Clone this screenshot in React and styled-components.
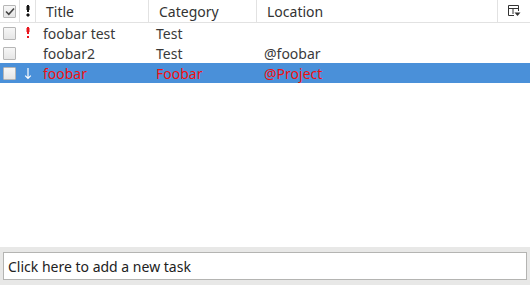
import React from "react";
import styled, { createGlobalStyle } from "styled-components";

const GlobalStyle = createGlobalStyle`
  html, body {
    margin: 0;
    padding: 0;
    background: #ffffff;
  }
  body {
    font-family: "Noto Sans", "DejaVu Sans", sans-serif;
  }
`;

const COLUMNS = "20px 16px 113px 108px 241px 32px";

const Window = styled.div`
  width: 530px;
  height: 285px;
  display: flex;
  flex-direction: column;
  background: #ffffff;
  overflow: hidden;
`;

const List = styled.div`
  flex: 1;
  display: flex;
  flex-direction: column;
`;

const Header = styled.div`
  display: grid;
  grid-template-columns: ${COLUMNS};
  height: 22px;
  border-bottom: 1px solid #e2e2e2;
`;

const HeaderCell = styled.div`
  display: flex;
  align-items: center;
  justify-content: ${(p) => (p.$center ? "center" : "flex-start")};
  padding-left: ${(p) => (p.$center ? 0 : 10)}px;
  border-right: ${(p) => (p.$last ? "none" : "1px solid #e2e2e2")};
  font-size: 14px;
  color: #333333;
`;

const Row = styled.div`
  display: grid;
  grid-template-columns: ${COLUMNS};
  height: 20px;
  background: ${(p) => (p.$selected ? "#4a90d9" : "transparent")};
  color: ${(p) => (p.$red ? "#f01010" : "#3a3a3a")};
`;

const Cell = styled.div`
  display: flex;
  align-items: center;
  justify-content: ${(p) => (p.$center ? "center" : "flex-start")};
  padding-left: ${(p) => (p.$center ? 0 : 7)}px;
  font-size: 14px;
  white-space: nowrap;
  overflow: hidden;
`;

const CheckCell = styled.div`
  display: flex;
  align-items: center;
  padding-left: 3px;
`;

const Check = styled.div`
  width: 11px;
  height: 11px;
  border: 1px solid #b6b6b6;
  border-radius: 1px;
  background: linear-gradient(#f6f6f6, #e6e6e6);
  display: flex;
  align-items: center;
  justify-content: center;
`;

const Footer = styled.div`
  height: 38px;
  background: #e8e8e7;
  display: flex;
  align-items: stretch;
  padding: 5px 3px;
  box-sizing: border-box;
`;

const TaskInput = styled.div`
  flex: 1;
  border: 1px solid #b4b4b2;
  background: #ffffff;
  display: flex;
  align-items: center;
  padding-left: 4px;
  font-size: 14px;
  color: #222222;
`;

const CheckMark = () => (
  <svg width="10" height="9" viewBox="0 0 10 9">
    <path d="M1 4.5 L3.8 7.3 L9 1.5" fill="none" stroke="#444" strokeWidth="1.6" />
  </svg>
);

const PriorityIcon = ({ color, plus }) => (
  <svg width="6" height="14" viewBox="0 0 6 14">
    <rect x="2" y="1" width="2" height="7" fill={color} />
    <rect x="1.5" y="2" width="3" height="4" fill={color} />
    {plus ? (
      <>
        <rect x="2" y="9.5" width="2" height="3" fill={color} />
        <rect x="1" y="10.5" width="4" height="1" fill={color} />
      </>
    ) : (
      <rect x="2" y="10" width="2" height="2" fill={color} />
    )}
  </svg>
);

const ArrowDown = () => (
  <svg width="8" height="13" viewBox="0 0 8 13">
    <path d="M4 1 V11.5 M1.2 8.6 L4 11.5 L6.8 8.6" fill="none" stroke="#fff" strokeWidth="1.2" />
  </svg>
);

const ColumnsIcon = () => (
  <svg width="13" height="12" viewBox="0 0 13 12">
    <path d="M0.5 0.5 H10.5 V6 M0.5 0.5 V10.5 H6 M0.5 3.5 H10.5 M5 3.5 V9" fill="none" stroke="#333" strokeWidth="1" />
    <path d="M6.5 7.5 H12.5 L9.5 11 Z" fill="#333" />
  </svg>
);

const tasks = [
  { title: "foobar test", category: "Test", location: "", priority: "high" },
  { title: "foobar2", category: "Test", location: "@foobar", priority: "" },
  { title: "foobar", category: "Foobar", location: "@Project", priority: "low", selected: true, red: true },
];

const App = () => {
  return (
    <Window>
      <GlobalStyle />
      <List>
        <Header>
          <HeaderCell $center>
            <Check>
              <CheckMark />
            </Check>
          </HeaderCell>
          <HeaderCell $center>
            <PriorityIcon color="#111" plus />
          </HeaderCell>
          <HeaderCell>Title</HeaderCell>
          <HeaderCell>Category</HeaderCell>
          <HeaderCell>Location</HeaderCell>
          <HeaderCell $center $last>
            <ColumnsIcon />
          </HeaderCell>
        </Header>
        {tasks.map((t) => (
          <Row key={t.title} $selected={t.selected} $red={t.red}>
            <CheckCell>
              <Check />
            </CheckCell>
            <Cell $center>
              {t.priority === "high" && <PriorityIcon color="#e8141c" />}
              {t.priority === "low" && <ArrowDown />}
            </Cell>
            <Cell>{t.title}</Cell>
            <Cell>{t.category}</Cell>
            <Cell>{t.location}</Cell>
            <Cell />
          </Row>
        ))}
      </List>
      <Footer>
        <TaskInput>Click here to add a new task</TaskInput>
      </Footer>
    </Window>
  );
};

export default App;
